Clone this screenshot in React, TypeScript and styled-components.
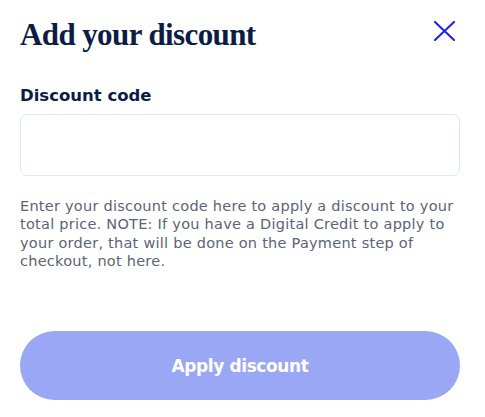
import React from 'react';
import styled, { createGlobalStyle } from 'styled-components';

const GlobalStyle = createGlobalStyle`
  html, body {
    margin: 0;
    padding: 0;
    background: #ffffff;
  }
  * {
    box-sizing: border-box;
  }
`;

const Panel = styled.div`
  width: 485px;
  padding: 16px 25px 0 20px;
  font-family: "DejaVu Sans", "Noto Sans", sans-serif;
`;

const Header = styled.div`
  display: flex;
  align-items: flex-start;
  justify-content: space-between;
`;

const Title = styled.h2`
  margin: 0;
  font-family: "Liberation Serif", "DejaVu Serif", serif;
  font-weight: 700;
  font-size: 31px;
  line-height: 38px;
  letter-spacing: -0.6px;
  color: #0b1d45;
`;

const CloseButton = styled.button`
  border: 0;
  background: none;
  padding: 0;
  margin: 5px 5px 0 0;
  width: 21px;
  height: 20px;
  display: flex;
  cursor: pointer;
`;

const Label = styled.label`
  display: block;
  margin-top: 32px;
  font-size: 16.5px;
  font-weight: 600;
  line-height: 20px;
  color: #0b1d45;
`;

const CodeInput = styled.input`
  display: block;
  width: 440px;
  height: 62px;
  margin-top: 8px;
  border: 1px solid #dbe6f5;
  border-radius: 7px;
  outline: none;
  padding: 0 14px;
  font-size: 15px;
`;

const Help = styled.p`
  margin: 21px 0 0;
  width: 440px;
  font-size: 14.5px;
  line-height: 18.3px;
  color: #5b6478;
  letter-spacing: 0.25px;
`;

const ApplyButton = styled.button`
  display: block;
  width: 440px;
  height: 69px;
  margin-top: 61px;
  border: 0;
  border-radius: 35px;
  background: #9aa7f4;
  color: #ffffff;
  font-family: "DejaVu Sans", "Noto Sans", sans-serif;
  font-size: 17px;
  font-weight: 700;
  letter-spacing: -0.4px;
`;

const App = () => (
  <>
    <GlobalStyle />
    <Panel>
      <Header>
        <Title>Add your discount</Title>
        <CloseButton aria-label="Close">
          <svg width="21" height="20" viewBox="0 0 21 20">
            <path d="M1 1 L20 19 M20 1 L1 19" stroke="#1b25e4" strokeWidth="2.1" strokeLinecap="round" />
          </svg>
        </CloseButton>
      </Header>
      <Label htmlFor="code">Discount code</Label>
      <CodeInput id="code" />
      <Help>
        Enter your discount code here to apply a discount to your total price. NOTE: If you have a
        Digital Credit to apply to your order, that will be done on the Payment step of checkout,
        not here.
      </Help>
      <ApplyButton>Apply discount</ApplyButton>
    </Panel>
  </>
);

export default App;
